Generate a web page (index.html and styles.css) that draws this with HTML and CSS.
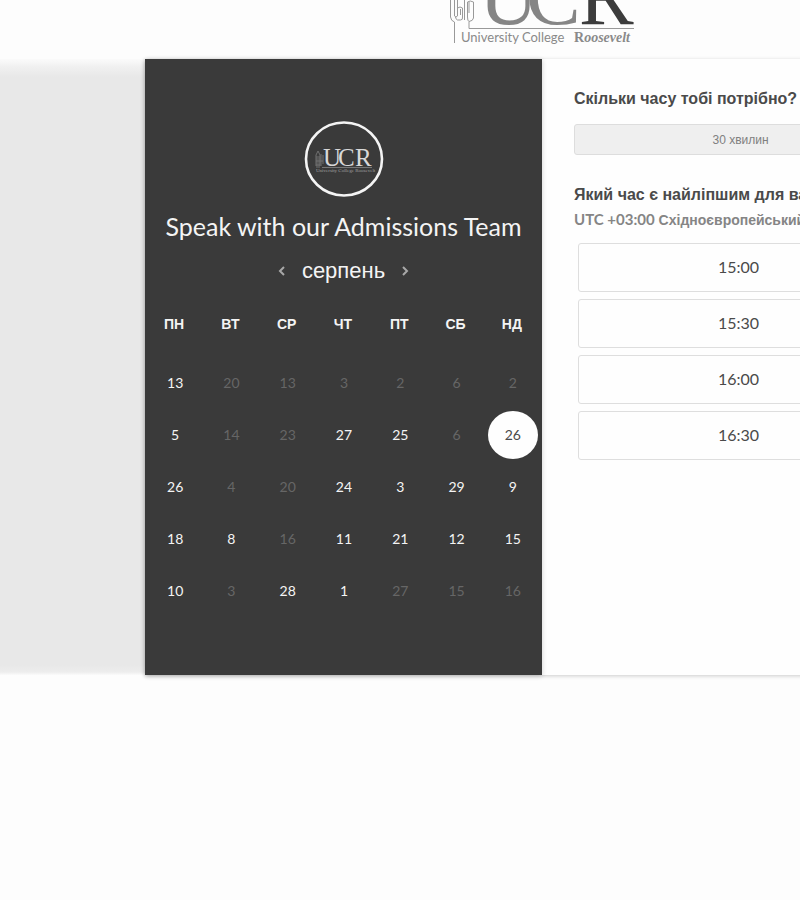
FILE: index.html
```
<!DOCTYPE html>
<html lang="uk">
<head>
<meta charset="utf-8">
<meta name="viewport" content="width=device-width, initial-scale=1">
<title>Speak with our Admissions Team</title>
<link rel="stylesheet" href="styles.css">
</head>
<body>
<div class="page">
  <header class="header">
    <svg class="brand" width="186" height="46" viewBox="0 0 186 46" role="img" aria-label="University College Roosevelt">
      <g fill="none" stroke="#999" stroke-width="1">
        <path d="M1.500 0V17Q2 21 5.500 22V43M5.500 0V16Q7 18 8.500 16V0M8.500 8Q11 6 13.500 8V17Q14 20 11.500 20H8.500Q6.500 19 6.500 17M11.500 9V15M15.500 0V20M18.500 2V17Q18.500 21 20 21.500V28.500H185M20 2V13M24.500 2V18Q24 21 20 21.500M18.500 2Q21 0 24.500 2"/>
      </g>
      <g class="brand-initials">
        <text x="30" y="24">U</text>
        <text x="77" y="24">C</text>
        <text class="brand-dark" x="130" y="24">R</text>
      </g>
      <text class="brand-name" x="12" y="42">University College</text>
      <text class="brand-roosevelt" x="125" y="42">R<tspan font-style="italic">oosevelt</tspan></text>
    </svg>
  </header>
  <main class="stage">
    <div class="scheduler">
      <section class="calendar">
        <svg class="avatar" width="80" height="76" viewBox="0 0 80 76" role="img" aria-label="UCR">
          <ellipse cx="40" cy="38" rx="38" ry="36.500" fill="none" stroke="#f4f4f4" stroke-width="2.600"/>
          <path d="M12 45V34L14 30L16 34V45M13 35V47M15 35V47M17 33V43M19 34V43M12 40H19M12 44H18" fill="none" stroke="#707070" stroke-width="1"/>
          <g class="avatar-initials">
            <text x="19" y="45">U</text>
            <text x="34" y="45">C</text>
            <text x="51" y="45">R</text>
          </g>
          <path d="M18 46.500H68" stroke="#777" stroke-width="1"/>
          <text class="avatar-name" x="12" y="51">University College Roosevelt</text>
        </svg>
        <h1 class="title">Speak with our Admissions Team</h1>
        <div class="month">
          <button class="arrow" type="button" aria-label="Попередній місяць"><svg width="8" height="12" viewBox="0 0 8 12"><path d="M6 2L2 6L6 10"/></svg></button>
          <h2 class="month-name">серпень</h2>
          <button class="arrow" type="button" aria-label="Наступний місяць"><svg width="8" height="12" viewBox="0 0 8 12"><path d="M2 2L6 6L2 10"/></svg></button>
        </div>
        <table class="days">
          <thead><tr><th scope="col">ПН</th><th scope="col">ВТ</th><th scope="col">СР</th><th scope="col">ЧТ</th><th scope="col">ПТ</th><th scope="col">СБ</th><th scope="col">НД</th></tr></thead>
          <tbody>
            <tr><td><button type="button">13</button></td><td><button type="button" disabled>20</button></td><td><button type="button" disabled>13</button></td><td><button type="button" disabled>3</button></td><td><button type="button" disabled>2</button></td><td><button type="button" disabled>6</button></td><td><button type="button" disabled>2</button></td></tr>
            <tr><td><button type="button">5</button></td><td><button type="button" disabled>14</button></td><td><button type="button" disabled>23</button></td><td><button type="button">27</button></td><td><button type="button">25</button></td><td><button type="button" disabled>6</button></td><td><button type="button" class="selected" aria-pressed="true">26</button></td></tr>
            <tr><td><button type="button">26</button></td><td><button type="button" disabled>4</button></td><td><button type="button" disabled>20</button></td><td><button type="button">24</button></td><td><button type="button">3</button></td><td><button type="button">29</button></td><td><button type="button">9</button></td></tr>
            <tr><td><button type="button">18</button></td><td><button type="button">8</button></td><td><button type="button" disabled>16</button></td><td><button type="button">11</button></td><td><button type="button">21</button></td><td><button type="button">12</button></td><td><button type="button">15</button></td></tr>
            <tr><td><button type="button">10</button></td><td><button type="button" disabled>3</button></td><td><button type="button">28</button></td><td><button type="button">1</button></td><td><button type="button" disabled>27</button></td><td><button type="button" disabled>15</button></td><td><button type="button" disabled>16</button></td></tr>
          </tbody>
        </table>
      </section>
      <section class="booking">
        <h2 class="question">Скільки часу тобі потрібно?</h2>
        <button class="duration" type="button">30 хвилин</button>
        <h2 class="question">Який час є найліпшим для вас?</h2>
        <p class="zone"><span class="zone-offset">UTC +03:00</span> Східноєвропейський час</p>
        <div class="slots">
          <button class="slot" type="button">15:00</button>
          <button class="slot" type="button">15:30</button>
          <button class="slot" type="button">16:00</button>
          <button class="slot" type="button">16:30</button>
        </div>
      </section>
    </div>
  </main>
</div>
</body>
</html>
```
FILE: styles.css
```
* { box-sizing: border-box; }

html { overflow: hidden; background: #fdfdfd; }

body {
  margin: 0;
  font-family: "Liberation Sans", Arial, sans-serif;
  color: #4a4a4a;
}

button { font: inherit; color: inherit; cursor: pointer; }

h1, h2, p { margin: 0; }

.page { min-width: 1084px; padding-bottom: 40px; }

.header {
  display: flex;
  justify-content: center;
  padding-bottom: 13px;
}

.brand { display: block; }

.brand-initials {
  font-family: "Liberation Serif", serif;
  font-size: 82px;
  fill: #858585;
}

.brand-initials .brand-dark { fill: #3c3c3c; }

.brand-name { font-family: Lato, sans-serif; font-size: 13px; fill: #8a8a8a; }

.brand-roosevelt {
  font-family: "Liberation Serif", serif;
  font-size: 14px;
  font-weight: bold;
  fill: #8a8a8a;
}

.stage {
  background: linear-gradient(#fbfbfb, #f0f0f0 8px, #e8e8e8 18px, #e8e8e8 calc(100% - 10px), #ededed calc(100% - 3px), #fbfbfb);
}

.scheduler {
  display: grid;
  grid-template-columns: 1fr 1fr;
  max-width: 794px;
  margin: 0 auto;
  background: #fefefe;
  box-shadow: 0 1px 4px rgba(0, 0, 0, 0.2);
}

.calendar {
  display: flex;
  flex-direction: column;
  align-items: center;
  padding: 62px 0 58px;
  background: #3a3a3a;
  color: #f4f4f4;
  box-shadow: 0 1px 5px rgba(0, 0, 0, 0.2);
}

.avatar { display: block; }

.avatar-initials {
  font-family: "Liberation Serif", serif;
  font-size: 25px;
  fill: #d8d8d8;
}

.avatar-name { font-family: "Liberation Serif", serif; font-size: 5px; fill: #a0a0a0; }

.title {
  margin-top: 13px;
  font: 400 25px/32px Lato, sans-serif;
  white-space: nowrap;
}

.month {
  display: flex;
  align-items: center;
  gap: 16px;
  margin-top: 15px;
}

.month-name { font-size: 22px; line-height: 28px; font-weight: 400; }

.arrow { display: flex; padding: 0; border: 0; background: none; }

.arrow path { fill: none; stroke: #a8a8a8; stroke-width: 2; }

.days {
  width: calc(100% - 3px);
  align-self: flex-start;
  margin-top: 21px;
  border-collapse: collapse;
  table-layout: fixed;
}

.days th {
  height: 36px;
  padding: 0 0 0 2px;
  font-size: 14px;
  font-weight: 700;
}

.days td { height: 52px; padding: 0 0 0 4px; text-align: center; }

.days tbody::before { content: ""; display: table-row; height: 15px; }

.days td button {
  width: 50px;
  height: 48px;
  padding: 0;
  border: 0;
  border-radius: 50%;
  background: none;
  font: 400 14px/20px Lato, sans-serif;
  vertical-align: middle;
}

.days td button:disabled { color: #666; cursor: default; }

.days td .selected { background: #fefefe; color: #4a4a4a; }

.booking { padding: 30px 32px; }

.question {
  font-size: 16px;
  line-height: 20px;
  white-space: nowrap;
}

.duration {
  display: block;
  width: 100%;
  height: 31px;
  margin: 15px 0 30px;
  border: 1px solid #ddd;
  border-radius: 3px;
  background: #efefef;
  color: #808080;
  font-size: 12px;
}

.zone {
  margin-top: 4px;
  color: #858585;
  font-size: 14px;
  font-weight: 700;
  line-height: 20px;
  white-space: nowrap;
}

.zone-offset { font-family: Lato, sans-serif; font-size: 15px; }

.slots {
  display: grid;
  gap: 7px;
  margin: 13px 8px 0 4px;
}

.slot {
  height: 49px;
  padding: 0 0 1px;
  border: 1px solid #dedede;
  border-radius: 3px;
  background: #fefefe;
  font: 400 16px/20px Lato, sans-serif;
}
```
